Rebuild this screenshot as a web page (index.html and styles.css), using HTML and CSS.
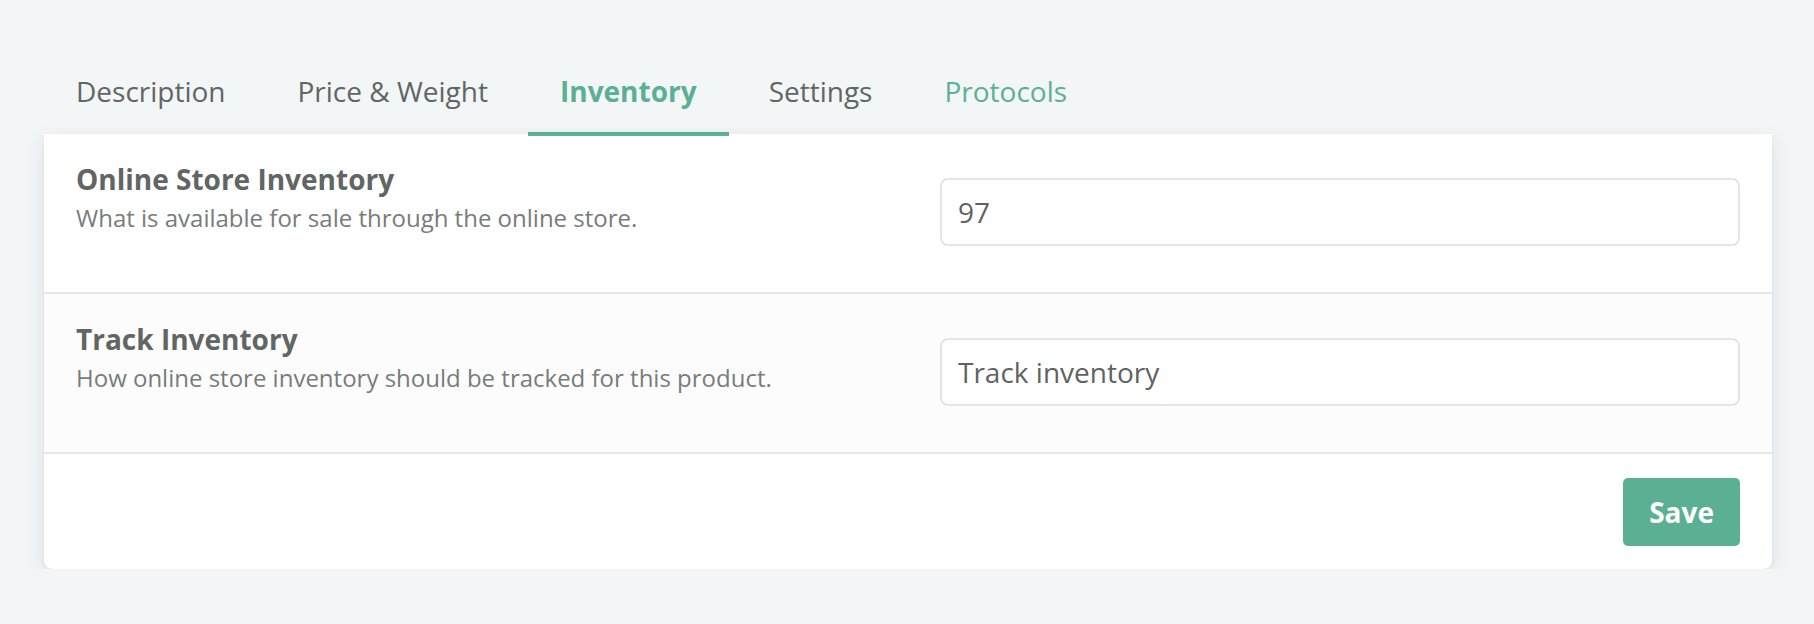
FILE: index.html
```html
<!DOCTYPE html>
<html lang="en">
<head>
<meta charset="utf-8">
<title>Inventory</title>
<link rel="stylesheet" href="styles.css">
</head>
<body>
<div class="page">
  <nav class="tabs">
    <a class="tab">Description</a>
    <a class="tab">Price &amp; Weight</a>
    <a class="tab active">Inventory</a>
    <a class="tab">Settings</a>
    <a class="tab link">Protocols</a>
  </nav>
  <section class="card">
    <div class="row">
      <div class="label">
        <h3 class="label-title">Online Store Inventory</h3>
        <p class="label-desc">What is available for sale through the online store.</p>
      </div>
      <input class="field" type="text" value="97">
    </div>
    <div class="row alt">
      <div class="label">
        <h3 class="label-title">Track Inventory</h3>
        <p class="label-desc">How online store inventory should be tracked for this product.</p>
      </div>
      <input class="field" type="text" value="Track inventory">
    </div>
    <div class="footer">
      <button class="btn-save" type="button">Save</button>
    </div>
  </section>
</div>
</body>
</html>
```

FILE: styles.css
```css
html, body {
  margin: 0;
  padding: 0;
  background: #f3f6f7;
  font-family: "Open Sans", "Liberation Sans", Arial, sans-serif;
}

.page {
  padding: 55px 42px 0 44px;
}

.tabs {
  display: flex;
  gap: 8px;
  margin-bottom: -2px;
  position: relative;
  z-index: 1;
}

.tab {
  display: block;
  padding: 15px 32px 20px;
  font-size: 28px;
  line-height: 42px;
  color: #616564;
  border-bottom: 4px solid transparent;
  cursor: pointer;
}

.tab.active {
  color: #5bb094;
  font-weight: 700;
  border-bottom-color: #5bb094;
}

.tab.link {
  color: #5bb094;
}

.card {
  background: #ffffff;
  border-radius: 0 0 8px 8px;
  box-shadow: 0 6px 20px rgba(40, 50, 60, 0.11), 0 1px 3px rgba(40, 50, 60, 0.07);
}

.row {
  display: grid;
  grid-template-columns: 1fr 1fr;
  column-gap: 64px;
  box-sizing: border-box;
  height: 160px;
  padding: 0 32px;
  border-bottom: 2px solid #e6e6e6;
  background: #ffffff;
}

.row.alt {
  background: #fcfcfc;
}

.label {
  padding-top: 24px;
}

.label-title {
  margin: 0;
  font-size: 28px;
  line-height: 42px;
  font-weight: 700;
  color: #616564;
}

.label-desc {
  margin: 0;
  font-size: 24px;
  line-height: 36px;
  color: #787c7b;
}

.field {
  align-self: start;
  margin: 44px 0 0;
  box-sizing: border-box;
  width: 100%;
  height: 68px;
  padding: 0 16px;
  border: 2px solid #e5e5e5;
  border-radius: 8px;
  background: #ffffff;
  font-family: "Open Sans", "Liberation Sans", Arial, sans-serif;
  font-size: 28px;
  color: #5f6362;
  outline: none;
}

.footer {
  display: flex;
  justify-content: flex-end;
  padding: 24px 32px 23px;
}

.btn-save {
  height: 68px;
  padding: 0 26px;
  border: none;
  border-radius: 5px;
  background: #5bb094;
  color: #ffffff;
  font-family: "Open Sans", "Liberation Sans", Arial, sans-serif;
  font-size: 28px;
  font-weight: 700;
  line-height: 68px;
  cursor: pointer;
}
```
